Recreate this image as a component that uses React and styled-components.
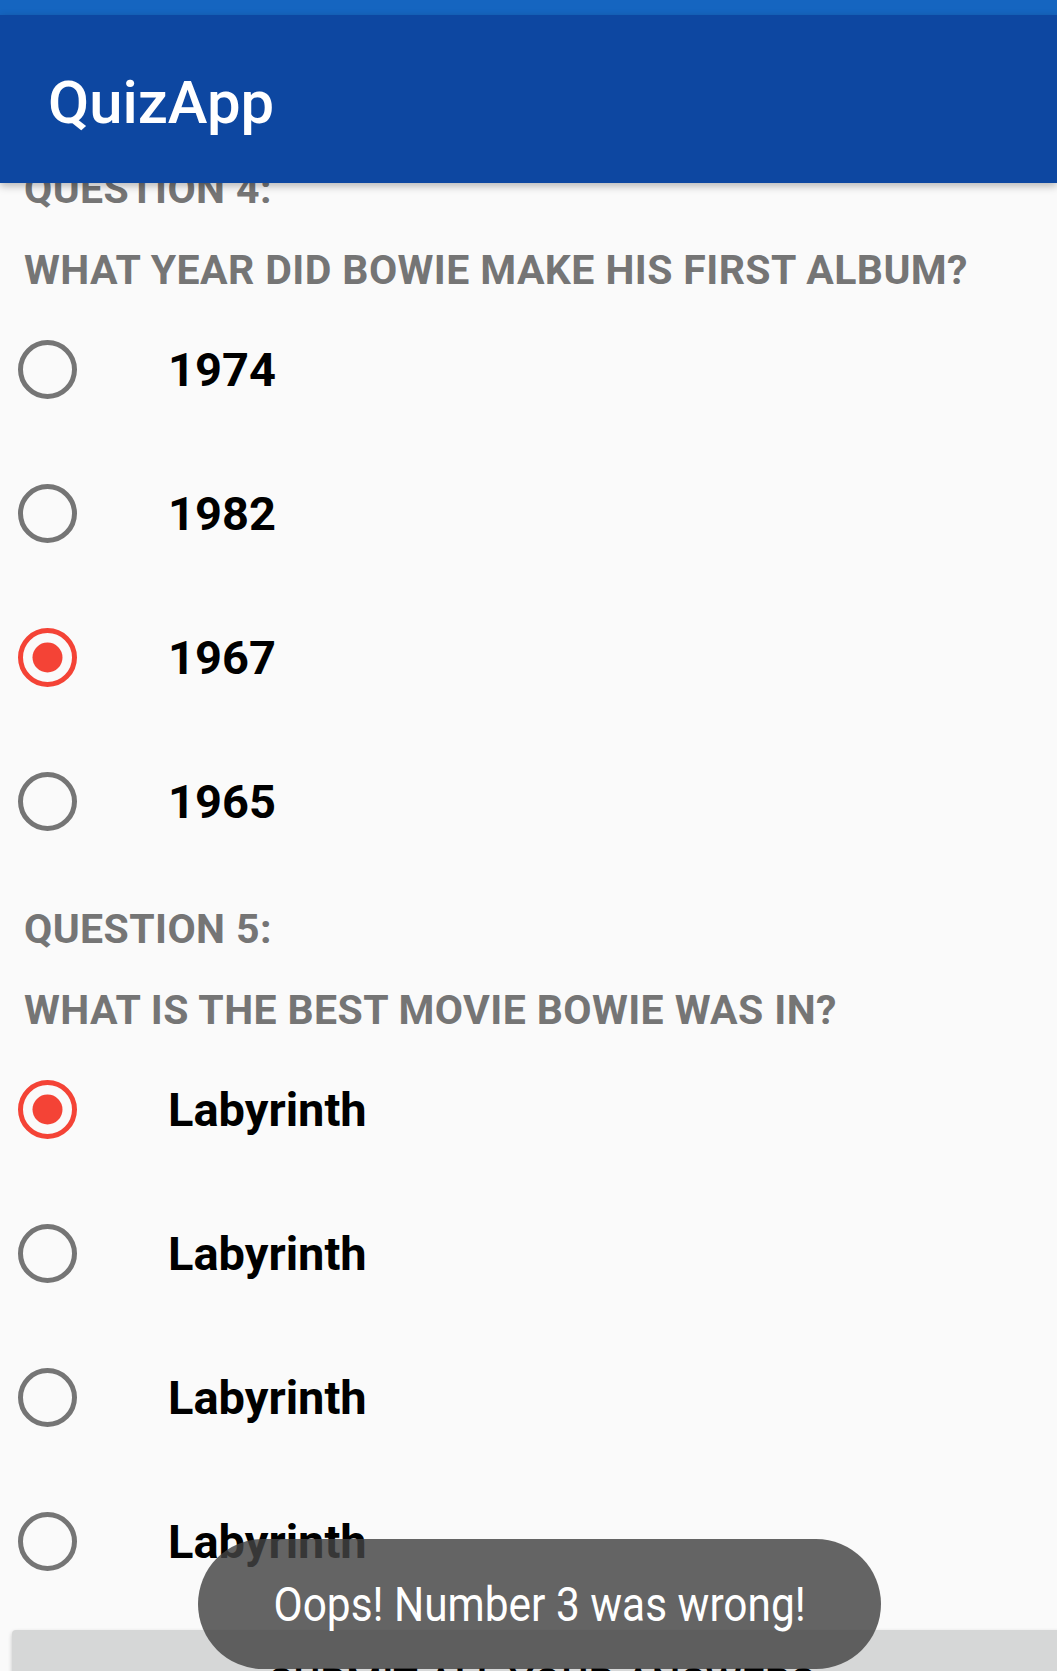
import React from 'react'
import styled, { createGlobalStyle } from 'styled-components'

const GlobalStyle = createGlobalStyle`
    html, body {
        margin: 0;
        padding: 0;
        background: #fafafa;
        font-family: Roboto, "Noto Sans", sans-serif;
    }
`;

const Screen = styled.div`
    position: relative;
    width: 1057px;
    height: 1671px;
    overflow: hidden;
    display: flex;
    flex-direction: column;
    background: #fafafa;
`;

const StatusBar = styled.div`
    height: 15px;
    flex-shrink: 0;
    background: #1565c0;
`;

const AppBar = styled.div`
    position: relative;
    z-index: 2;
    height: 168px;
    flex-shrink: 0;
    display: flex;
    align-items: center;
    padding: 8px 0 0 48px;
    box-sizing: border-box;
    background: #0d47a1;
    box-shadow: 0 3px 8px rgba(0, 0, 0, 0.28);
`;

const Title = styled.h1`
    margin: 0;
    font-size: 59.8px;
    font-weight: 500;
    color: #fff;
`;

const Scroller = styled.div`
    flex: 1;
    overflow: hidden;
`;

const ScrollInner = styled.div`
    margin-top: -18px;
    display: flex;
    flex-direction: column;
    gap: 32px;
`;

const Section = styled.section`
    display: flex;
    flex-direction: column;
`;

const Heading = styled.div`
    padding-left: 24px;
    font-size: 41px;
    line-height: 48px;
    letter-spacing: 0.4px;
    font-weight: 700;
    color: #757575;
    text-transform: uppercase;
    margin-bottom: ${props => props.$gap}px;
`;

const Option = styled.label`
    height: 144px;
    display: flex;
    align-items: center;
`;

const RadioIcon = styled.svg`
    width: 59px;
    height: 59px;
    margin-left: 18px;
    flex-shrink: 0;
`;

const OptionText = styled.span`
    margin-left: 91px;
    font-size: 47px;
    font-weight: 700;
    color: #000;
`;

const SubmitButton = styled.button`
    margin: 17px 0 0 12px;
    width: 1060px;
    height: 130px;
    padding: 29px 0 0;
    border: none;
    border-radius: 4px;
    background: #d6d7d7;
    box-shadow: 0 2px 4px rgba(0, 0, 0, 0.22);
    font-family: Roboto, sans-serif;
    font-size: 41px;
    line-height: 48px;
    font-weight: 500;
    color: #000;
    display: flex;
    justify-content: center;
    align-items: flex-start;
    box-sizing: border-box;
`;

const Toast = styled.div`
    position: absolute;
    left: 198px;
    top: 1539px;
    width: 683px;
    height: 130px;
    border-radius: 65px;
    background: rgba(67, 67, 67, 0.82);
    display: flex;
    align-items: center;
    justify-content: center;
    z-index: 5;
`;

const ToastText = styled.span`
    display: inline-block;
    font-size: 49px;
    color: #fff;
    white-space: nowrap;
    transform: scaleX(0.865);
`;

function Radio({ checked }) {
  const ring = checked ? '#f44336' : '#757575'
  return (
    <RadioIcon viewBox="0 0 59 59">
      <circle cx="29.5" cy="29.5" r="27" fill="none" stroke={ring} strokeWidth="5" />
      {checked && <circle cx="29.5" cy="29.5" r="15" fill="#f44336" />}
    </RadioIcon>
  )
}

const questions = [
  {
    num: 4,
    text: 'What year did Bowie make his first album?',
    options: ['1974', '1982', '1967', '1965'],
    picked: 2,
  },
  {
    num: 5,
    text: 'What is the best movie Bowie was in?',
    options: ['Labyrinth', 'Labyrinth', 'Labyrinth', 'Labyrinth'],
    picked: 0,
  },
]

function App() {
  return (
    <Screen>
      <GlobalStyle />
      <StatusBar />
      <AppBar>
        <Title>QuizApp</Title>
      </AppBar>
      <Scroller>
        <ScrollInner>
          {questions.map(q => (
            <Section key={q.num}>
              <Heading $gap={33}>Question {q.num}:</Heading>
              <Heading $gap={3}>{q.text}</Heading>
              {q.options.map((opt, i) => (
                <Option key={i}>
                  <Radio checked={i === q.picked} />
                  <OptionText>{opt}</OptionText>
                </Option>
              ))}
            </Section>
          ))}
        </ScrollInner>
        <SubmitButton>SUBMIT ALL YOUR ANSWERS</SubmitButton>
      </Scroller>
      <Toast>
        <ToastText>Oops! Number 3 was wrong!</ToastText>
      </Toast>
    </Screen>
  )
}

export default App
